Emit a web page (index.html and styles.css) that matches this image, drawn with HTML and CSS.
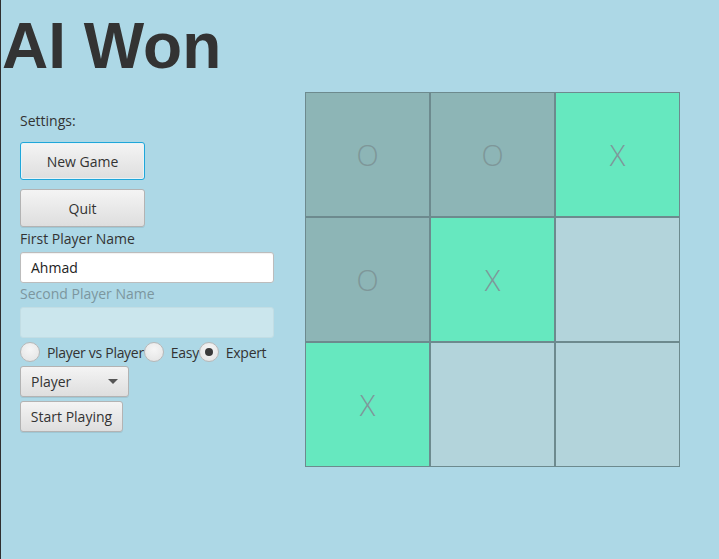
FILE: index.html
```html
<!DOCTYPE html>
<html>
<head>
<meta charset="utf-8">
<link rel="stylesheet" href="styles.css">
</head>
<body>
<div class="app">
  <h1 class="title">AI Won</h1>
  <div class="main">
    <div class="side">
      <div class="label">Settings:</div>
      <button class="btn btn-wide focused">New Game</button>
      <button class="btn btn-wide quit">Quit</button>
      <div class="label first">First Player Name</div>
      <div class="field">Ahmad</div>
      <div class="label disabled second">Second Player Name</div>
      <div class="field field-disabled"></div>
      <div class="radios">
        <span class="radio"><span class="dot"></span></span><span class="rlabel">Player vs Player</span>
        <span class="radio"><span class="dot"></span></span><span class="rlabel">Easy</span>
        <span class="radio checked"><span class="dot"></span></span><span class="rlabel">Expert</span>
      </div>
      <div class="btn combo"><span>Player</span><span class="arrow"></span></div>
      <button class="btn start">Start Playing</button>
    </div>
    <div class="board">
      <div class="cell o">O</div>
      <div class="cell o">O</div>
      <div class="cell x">X</div>
      <div class="cell o">O</div>
      <div class="cell x">X</div>
      <div class="cell e"></div>
      <div class="cell x">X</div>
      <div class="cell e"></div>
      <div class="cell e"></div>
    </div>
  </div>
</div>
</body>
</html>
```

FILE: styles.css
```css
html, body {
  margin: 0;
  padding: 0;
  background: #add8e6;
}

.app {
  min-height: 559px;
  box-sizing: border-box;
  border-left: 1px solid #2f2f2f;
  font-family: "Open Sans", "Noto Sans", sans-serif;
  font-size: 14px;
  color: #333333;
}

.title {
  margin: 0;
  padding: 14px 0 0 1px;
  height: 64px;
  line-height: 64px;
  font-family: "Liberation Sans", Arial, sans-serif;
  font-weight: bold;
  font-size: 64px;
  color: #333333;
}

.main {
  display: flex;
  margin-top: 14px;
  padding-left: 19px;
  gap: 31px;
}

.side {
  width: 254px;
  flex-shrink: 0;
  display: flex;
  flex-direction: column;
  align-items: flex-start;
  padding-top: 20px;
}

.label {
  line-height: 18px;
  height: 18px;
  white-space: nowrap;
}

.label.first { margin-top: 3px; }
.label.second { margin-top: 2px; }
.label.disabled { color: #7c969e; }

.btn {
  box-sizing: border-box;
  font-family: inherit;
  font-size: 14px;
  color: #333333;
  border: 1px solid #b3b3b3;
  border-radius: 3px;
  background: linear-gradient(#f4f4f4, #dedede);
  box-shadow: 0 1px 0 rgba(0,0,0,0.08);
  padding: 0 9px;
  display: flex;
  align-items: center;
  justify-content: center;
  white-space: nowrap;
}

.btn-wide {
  width: 125px;
  height: 38px;
}

.focused {
  margin-top: 12px;
  border: 1px solid #1fa6d9;
  box-shadow: inset 0 0 0 1px #e8f3f7;
}

.quit {
  margin-top: 9px;
}

.field {
  box-sizing: border-box;
  width: 254px;
  height: 31px;
  margin-top: 4px;
  border: 1px solid #bcbcbc;
  border-radius: 3px;
  background: #ffffff;
  box-shadow: inset 0 1px 1px rgba(0,0,0,0.06);
  padding-left: 10px;
  line-height: 29px;
  color: #222222;
}

.field-disabled {
  background: #cbe6ed;
  border-color: #c2dde4;
  box-shadow: none;
}

.radios {
  display: flex;
  align-items: center;
  margin-top: 4px;
  height: 20px;
  white-space: nowrap;
}

.radio {
  box-sizing: border-box;
  flex-shrink: 0;
  width: 20px;
  height: 20px;
  border-radius: 50%;
  border: 1px solid #b8b8b8;
  background: radial-gradient(circle at 50% 35%, #f6f6f6, #e2e2e2);
  display: flex;
  align-items: center;
  justify-content: center;
}

.radio .dot {
  width: 8px;
  height: 8px;
  border-radius: 50%;
}

.radio.checked .dot {
  background: #3a3a3a;
}

.rlabel {
  flex-shrink: 0;
  margin-left: 7px;
  letter-spacing: -0.3px;
}

.combo {
  margin-top: 4px;
  width: 109px;
  height: 31px;
  justify-content: space-between;
  padding: 0 10px;
}

.arrow {
  width: 0;
  height: 0;
  border-left: 5px solid transparent;
  border-right: 5px solid transparent;
  border-top: 5px solid #555555;
}

.start {
  margin-top: 4px;
  height: 31px;
  width: 103px;
}

.board {
  display: grid;
  grid-template-columns: repeat(3, 125px);
  grid-template-rows: repeat(3, 125px);
  width: 375px;
  height: 375px;
}

.cell {
  box-sizing: border-box;
  border: 1px solid #6d8a8e;
  display: flex;
  align-items: center;
  justify-content: center;
  font-family: "Open Sans", sans-serif;
  font-weight: 300;
  font-size: 29px;
  color: #7e9799;
}

.cell.o { background: #8db5b6; }
.cell.x { background: #66e8bf; }
.cell.e { background: #b3d4db; }
```
